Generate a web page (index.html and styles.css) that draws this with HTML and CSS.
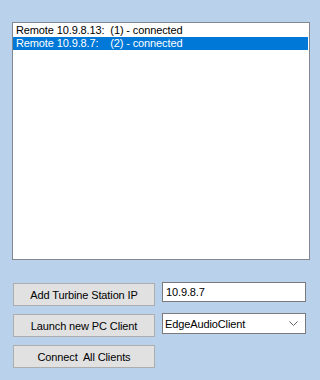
FILE: index.html
```html
<!DOCTYPE html>
<html>
<head>
<meta charset="utf-8">
<link rel="stylesheet" href="styles.css">
</head>
<body>
<div class="form">
  <div class="listbox">
    <div class="item">Remote 10.9.8.13:  (1) - connected</div>
    <div class="item selected">Remote 10.9.8.7:    (2) - connected</div>
  </div>
  <div class="controls">
    <div class="button">Add Turbine Station IP</div>
    <div class="textbox">10.9.8.7</div>
    <div class="button">Launch new PC Client</div>
    <div class="combo">
      <span class="combo-text">EdgeAudioClient</span>
      <svg class="chevron" width="9" height="5" viewBox="0 0 9 5"><polyline points="0.5,0.5 4.5,4.5 8.5,0.5" fill="none" stroke="#606060" stroke-width="1"/></svg>
    </div>
    <div class="button">Connect  All Clients</div>
  </div>
</div>
</body>
</html>
```
FILE: styles.css
```css
html, body {
  margin: 0;
  padding: 0;
  background: #b9d1ea;
}
body {
  width: 320px;
  height: 380px;
  overflow: hidden;
  font-family: "Liberation Sans", Arial, sans-serif;
  font-size: 11px;
  letter-spacing: -0.12px;
  color: #000;
}
.form {
  padding: 22px 0 0 12px;
}
.listbox {
  box-sizing: border-box;
  width: 298px;
  height: 238px;
  background: #fff;
  border: 1px solid #828790;
  padding: 1px 1px 0 0;
}
.item {
  height: 13px;
  line-height: 13px;
  padding-left: 3px;
  white-space: pre;
}
.item.selected {
  background: #0078d7;
  color: #fff;
}
.controls {
  display: grid;
  grid-template-columns: 142px 144px;
  grid-auto-rows: 31px;
  column-gap: 7px;
  margin: 22px 0 0 1px;
}
.button {
  box-sizing: border-box;
  height: 23px;
  margin-top: 1px;
  background: #e1e1e1;
  border: 1px solid #adadad;
  display: flex;
  align-items: center;
  justify-content: center;
  white-space: pre;
}
.textbox {
  box-sizing: border-box;
  height: 20px;
  background: #fff;
  border: 1px solid #7a7a7a;
  padding-left: 3px;
  line-height: 18px;
}
.combo {
  box-sizing: border-box;
  height: 21px;
  background: #fff;
  border: 1px solid #7a7a7a;
  padding: 0 7px 0 2px;
  display: flex;
  align-items: center;
  justify-content: space-between;
}
.chevron {
  display: block;
}
```
